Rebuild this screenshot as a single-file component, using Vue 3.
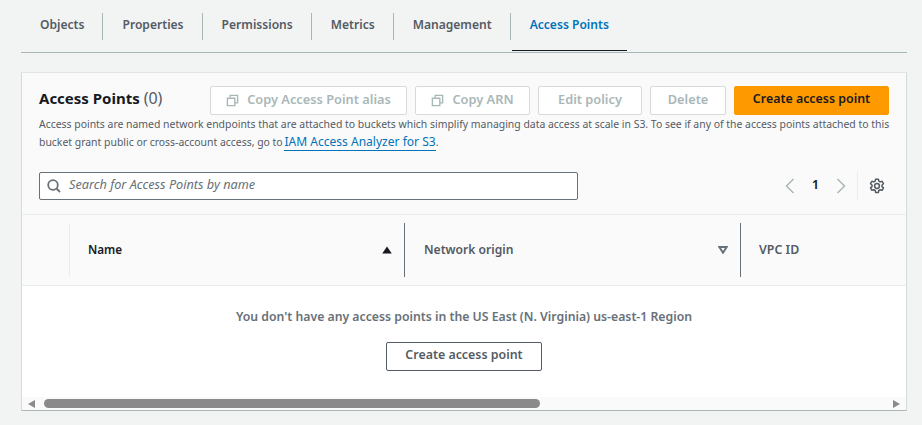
<script setup>
const tabs = ['Objects', 'Properties', 'Permissions', 'Metrics', 'Management', 'Access Points']
</script>

<template>
  <div class="page">
    <nav class="tabs">
      <a v-for="(t, i) in tabs" :key="t" class="tab" :class="{ active: i === 5 }"><span class="tab-label">{{ t }}</span></a>
    </nav>

    <section class="card">
      <header class="head">
        <div class="title-row">
          <h2 class="title">Access Points <span class="count">(0)</span></h2>
          <div class="actions">
            <button class="btn w-alias">
              <svg class="copy" viewBox="0 0 14 14"><path d="M4.500 3.500V1.500h8v8h-2.500M1.500 4.500h8v8h-8z" /></svg>
              Copy Access Point alias
            </button>
            <button class="btn w-arn">
              <svg class="copy" viewBox="0 0 14 14"><path d="M4.500 3.500V1.500h8v8h-2.500M1.500 4.500h8v8h-8z" /></svg>
              Copy ARN
            </button>
            <button class="btn w-edit">Edit policy</button>
            <button class="btn w-del">Delete</button>
            <button class="btn primary">Create access point</button>
          </div>
        </div>
        <div class="desc">
          <p class="desc-line">Access points are named network endpoints that are attached to buckets which simplify managing data access at scale in S3. To see if any of the access points attached to this</p>
          <p class="desc-line">bucket grant public or cross-account access, go to <a class="link">IAM Access Analyzer for S3</a>.</p>
        </div>
        <div class="tools">
          <label class="search">
            <svg class="search-icon" viewBox="0 0 14 14"><circle cx="6" cy="6" r="4.800" /><path d="M9.500 9.500L13 13" /></svg>
            <span class="placeholder">Search for Access Points by name</span>
          </label>
          <div class="pager">
            <svg class="chev" viewBox="0 0 10 16"><path d="M8.500 1L1.500 8l7 7" /></svg>
            <span class="page-num">1</span>
            <svg class="chev" viewBox="0 0 10 16"><path d="M1.500 1l7 7-7 7" /></svg>
            <span class="pager-sep"></span>
            <svg class="gear" viewBox="0 0 16 16">
              <path d="M6.600 1.200h2.800l.4 1.900 1.400.8 1.900-.6 1.400 2.400-1.500 1.300v1.600l1.500 1.300-1.400 2.400-1.900-.6-1.400.8-.4 1.900H6.600l-.4-1.900-1.400-.8-1.900.6-1.400-2.400 1.500-1.300V7.000L1.500 5.700l1.400-2.400 1.900.6 1.400-.8z" />
              <circle cx="8" cy="8" r="2.400" />
            </svg>
          </div>
        </div>
      </header>

      <div class="thead">
        <div class="th th-check"></div>
        <div class="th th-name">
          <span class="th-label strong">Name</span>
          <svg class="sort" viewBox="0 0 10 8"><path d="M5 .5L9.800 7.500H.2z" /></svg>
        </div>
        <div class="th th-origin">
          <span class="th-label">Network origin</span>
          <svg class="sort-off" viewBox="0 0 10 8"><path d="M1.300 1h7.400L5 6.700z" /></svg>
        </div>
        <div class="th th-vpc"><span class="th-label">VPC ID</span></div>
      </div>

      <div class="empty">
        <p class="empty-text">You don't have any access points in the US East (N. Virginia) us-east-1 Region</p>
        <button class="btn-outline">Create access point</button>
      </div>

      <div class="scrollbar">
        <span class="arrow left"></span>
        <span class="thumb"></span>
        <span class="arrow right"></span>
      </div>
    </section>
  </div>
</template>

<style scoped>
.page {
  width: 922px;
  height: 425px;
  box-sizing: border-box;
  padding: 0 15px 0 21px;
  background: #f2f3f3;
  font-family: "Noto Sans", "Open Sans", sans-serif;
  overflow: hidden;
}
.tabs {
  display: flex;
  height: 53px;
  box-sizing: border-box;
  border-bottom: 1px solid #aab7b8;
  padding-top: 13px;
}
.tab {
  position: relative;
  height: 27px;
  box-sizing: border-box;
  padding: 0 18px 0 19px;
  border-right: 1px solid #aab7b8;
  color: #545b64;
  font-size: 12.080px;
  font-weight: 600;
  line-height: 23px;
}
.tab.active {
  color: #0073bb;
  border-right: 0;
}
.tab.active::after {
  content: "";
  position: absolute;
  left: 1px;
  right: 0;
  top: 37px;
  height: 1px;
  background: #16191f;
}
.card {
  margin-top: 19px;
  height: 339px;
  box-sizing: border-box;
  background: #fff;
  border: 1px solid #d5dbdb;
  border-top-color: #e3e6e6;
  border-bottom: 1px solid #aab7b8;
  display: flex;
  flex-direction: column;
}
.head {
  background: #fafafa;
  border-bottom: 1px solid #eaeded;
  height: 142px;
  box-sizing: border-box;
  padding: 13px 17px 0;
}
.title-row {
  display: flex;
  justify-content: space-between;
  align-items: center;
  height: 29px;
}
.title {
  margin: 0 0 4px;
  font-size: 15px;
  font-weight: 700;
  color: #16191f;
  line-height: 25px;
}
.count {
  font-weight: 400;
  font-size: 16px;
  color: #545b64;
}
.actions {
  display: flex;
  gap: 8px;
}
.btn {
  height: 29px;
  box-sizing: border-box;
  border: 1px solid #d5dbdb;
  border-radius: 2px;
  background: #fff;
  color: #aab7b8;
  font: 600 12.800px "Noto Sans", "Open Sans", sans-serif;
  display: flex;
  align-items: center;
  justify-content: center;
  gap: 8px;
  padding: 0 0 4px;
}
.w-alias { width: 197px; }
.w-arn { width: 115px; }
.w-edit { width: 104px; }
.w-del { width: 76px; }
.primary {
  width: 155px;
  font-size: 12.400px;
  background: #ff9900;
  border-color: #ff9900;
  color: #16191f;
}
.copy {
  width: 13px;
  height: 13px;
  margin-top: 4px;
  fill: none;
  stroke: #aab7b8;
  stroke-width: 1.500;
}
.desc {
  height: 36px;
  font-size: 10.430px;
  line-height: 18px;
  color: #545b64;
}
.desc-line {
  margin: 0;
  white-space: nowrap;
}
.link {
  color: #0073bb;
  font-size: 12.050px;
  margin-left: -1px;
  border-bottom: 1px solid #0073bb;
}
.tools {
  display: flex;
  justify-content: space-between;
  align-items: center;
  margin-top: 20px;
}
.search {
  width: 539px;
  height: 28px;
  box-sizing: border-box;
  border: 1px solid #687078;
  border-radius: 2px;
  background: #fff;
  display: flex;
  align-items: center;
  padding-left: 7px;
  gap: 8px;
}
.search-icon {
  width: 14px;
  height: 14px;
  fill: none;
  stroke: #687078;
  stroke-width: 1.800;
}
.placeholder {
  font-size: 12.700px;
  font-style: italic;
  color: #687078;
  margin-top: -3px;
}
.pager {
  display: flex;
  align-items: center;
  height: 29px;
  margin-right: 4px;
}
.chev {
  width: 10px;
  height: 16px;
  fill: none;
  stroke: #aab7b8;
  stroke-width: 1.500;
}
.page-num {
  width: 41px;
  text-align: center;
  font-size: 13px;
  font-weight: 600;
  color: #16191f;
  line-height: 29px;
  margin-top: -3px;
}
.pager-sep {
  width: 1px;
  height: 29px;
  background: #eaeded;
  margin: 0 11px;
}
.gear {
  width: 16px;
  height: 16px;
  fill: none;
  stroke: #545b64;
  stroke-width: 1.500;
  stroke-linejoin: round;
}
.thead {
  display: flex;
  height: 71px;
  box-sizing: border-box;
  background: #fafafa;
  border-bottom: 1px solid #eaeded;
  padding: 8px 0;
}
.th {
  box-sizing: border-box;
  display: flex;
  align-items: center;
  justify-content: space-between;
  font-size: 12.100px;
  font-weight: 600;
  color: #545b64;
}
.th-label {
  margin-bottom: 1px;
}
.th-check {
  width: 48px;
  border-right: 1px solid #eaeded;
}
.th-name {
  width: 335px;
  padding: 0 12px 0 18px;
  border-right: 1px solid #687078;
}
.th-name .th-label {
  font-size: 11.700px;
  margin-bottom: 3px;
}
.th-origin {
  width: 336px;
  padding: 0 12px 0 19px;
  border-right: 1px solid #687078;
}
.th-vpc {
  padding-left: 18px;
  font-size: 12.400px;
}
.strong {
  color: #16191f;
}
.sort {
  width: 10px;
  height: 8px;
  fill: #16191f;
}
.sort-off {
  width: 10px;
  height: 8px;
  fill: none;
  stroke: #687078;
  stroke-width: 2;
}
.empty {
  flex: 1;
  display: flex;
  flex-direction: column;
  align-items: center;
  padding-top: 21px;
}
.empty-text {
  margin: 0 0 15px;
  font-size: 12.250px;
  font-weight: 600;
  line-height: 20px;
  color: #687078;
}
.btn-outline {
  width: 156px;
  height: 29px;
  box-sizing: border-box;
  background: #fff;
  border: 1px solid #545b64;
  border-radius: 2px;
  color: #545b64;
  font: 600 12.400px "Noto Sans", "Open Sans", sans-serif;
  padding: 0 0 4px;
}
.scrollbar {
  height: 13px;
  background: #fafafa;
  display: flex;
  align-items: center;
  padding: 0 6px;
}
.thumb {
  width: 496px;
  height: 9px;
  border-radius: 5px;
  background: #8a8a8a;
  margin-left: 9px;
}
.arrow {
  width: 0;
  height: 0;
  border-top: 4px solid transparent;
  border-bottom: 4px solid transparent;
}
.arrow.left {
  border-right: 7px solid #8a8a8a;
}
.arrow.right {
  border-left: 7px solid #8a8a8a;
  margin-left: auto;
}
</style>
